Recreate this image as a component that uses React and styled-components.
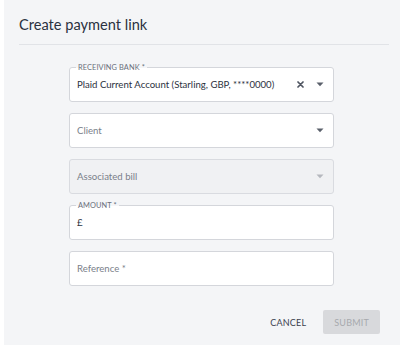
import React from 'react';
import styled, { createGlobalStyle } from 'styled-components';

const Global = createGlobalStyle`
  body {
    margin: 0;
    background: #fff;
    font-family: Lato, "Open Sans", sans-serif;
  }
`;

const Panel = styled.div`
  margin-left: 4px;
  width: 396px;
  height: 345px;
  background: #f4f5f7;
  box-sizing: border-box;
  padding: 0 11px 0 15px;
  display: flex;
  flex-direction: column;
`;

const Header = styled.h2`
  margin: 0;
  height: 45px;
  display: flex;
  align-items: center;
  font-size: 14.6px;
  font-weight: 400;
  color: #2a3140;
  border-bottom: 1px solid #e1e3e7;
  padding-top: 5px;
  box-sizing: border-box;
`;

const Form = styled.div`
  display: flex;
  flex-direction: column;
  gap: 11px;
  width: 265px;
  margin: 22px 0 0 50px;
`;

const Field = styled.div`
  position: relative;
  height: 35px;
  box-sizing: border-box;
  border: 1px solid ${p => (p.disabled ? '#d9dbe0' : '#d4d6db')};
  border-radius: 3px;
  background: ${p => (p.disabled ? '#f0f1f3' : '#fff')};
  display: flex;
  align-items: center;
  padding: 0 9px 0 7px;
  font-size: 9.6px;
`;

const Legend = styled.span`
  position: absolute;
  top: -5px;
  left: 6px;
  padding: 0 2px;
  font-size: 7.4px;
  color: #6a6f7b;
  text-transform: uppercase;
  letter-spacing: 0.1px;
  line-height: 9px;
  background: linear-gradient(#f4f5f7 0 5px, #fff 5px);
`;

const Value = styled.span`
  flex: 1;
  color: ${p => (p.$placeholder ? '#7a7f8a' : '#2c3240')};
  white-space: nowrap;
`;

const Icon = styled.span`
  display: flex;
  align-items: center;
  margin-left: ${p => p.$gap || 0}px;
`;

const Caret = ({ color = '#5a606b' }) => (
  <svg width="8" height="5" viewBox="0 0 8 5">
    <path d="M0.5 0.5 L7.5 0.5 L4 4.3 Z" fill={color} />
  </svg>
);

const Cross = () => (
  <svg width="7" height="7" viewBox="0 0 7 7">
    <path d="M1 1 L6 6 M6 1 L1 6" stroke="#4f5561" strokeWidth="1.7" strokeLinecap="round" />
  </svg>
);

const Actions = styled.div`
  display: flex;
  justify-content: flex-end;
  align-items: center;
  gap: 17px;
  margin-top: 24px;
  padding-right: 9px;
`;

const Button = styled.button`
  font-family: inherit;
  font-size: 9px;
  text-transform: uppercase;
  letter-spacing: 0.2px;
  border: none;
  border-radius: 2px;
  height: 24px;
  padding: 0 ${p => (p.$filled ? 11 : 0)}px;
  min-width: ${p => (p.$filled ? 56 : 0)}px;
  background: ${p => (p.$filled ? '#d8d9dc' : 'transparent')};
  color: ${p => (p.$filled ? '#a7a9ae' : '#3b414e')};
`;

export default function App() {
  return (
    <>
      <Global />
      <Panel>
        <Header>Create payment link</Header>
        <Form>
          <Field>
            <Legend>Receiving bank *</Legend>
            <Value>Plaid Current Account (Starling, GBP, ****0000)</Value>
            <Icon><Cross /></Icon>
            <Icon $gap={12}><Caret /></Icon>
          </Field>
          <Field>
            <Value $placeholder>Client</Value>
            <Icon><Caret /></Icon>
          </Field>
          <Field disabled>
            <Value $placeholder>Associated bill</Value>
            <Icon><Caret color="#b5b8be" /></Icon>
          </Field>
          <Field>
            <Legend>Amount *</Legend>
            <Value>£</Value>
          </Field>
          <Field>
            <Value $placeholder>Reference *</Value>
          </Field>
        </Form>
        <Actions>
          <Button>Cancel</Button>
          <Button $filled disabled>Submit</Button>
        </Actions>
      </Panel>
    </>
  );
}
